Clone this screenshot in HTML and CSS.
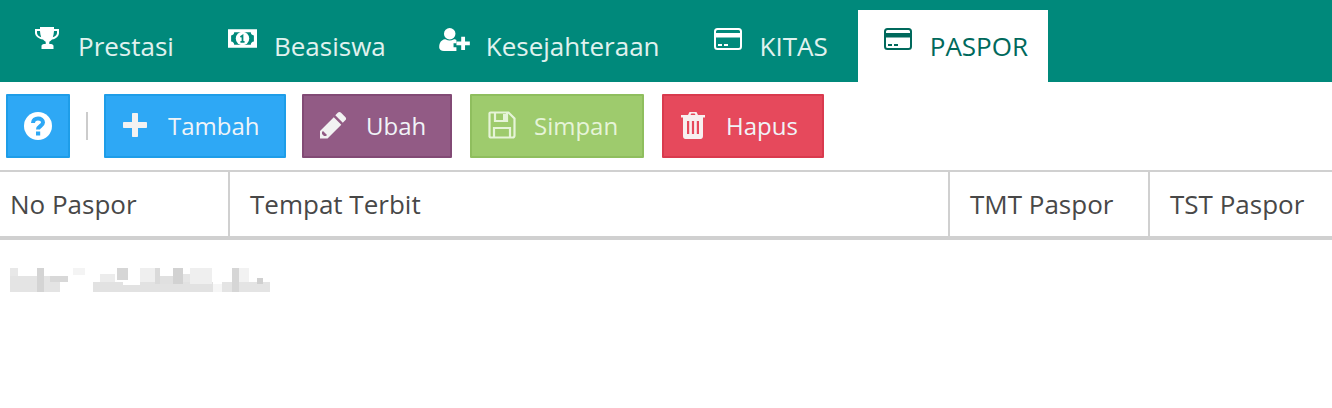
FILE: index.html
```html
<!DOCTYPE html>
<html lang="en">
<head>
  <meta charset="UTF-8">
  <meta name="viewport" content="width=device-width, initial-scale=1.0">
  <title>Data Paspor</title>
  <link rel="stylesheet" href="styles.css">
</head>
<body>

  <!-- Tabs -->
  <ul class="tabs">
    <li class="tab tab-prestasi">
      <svg class="tab-icon icon-trophy" width="26" height="24" viewBox="0 0 26 24"><path fill="#fff" d="M6 1h14v2h5v4c0 3-3 6-7 6.500-.8 1-1.700 1.700-2.700 2.200V18h1.700c1.500 0 2.500 1 2.500 2v3H7.500v-3c0-1 1-2 2.500-2h1.700v-2.300c-1-.5-1.900-1.200-2.700-2.200C5 13 1 10 1 7V3h5V1zM3 5v2c0 1.600 1.700 3.500 4.200 4.200C6.500 9.500 6.100 7.400 6 5H3zm20 0h-3c-.1 2.400-.5 4.500-1.200 6.200C21.300 10.500 23 8.600 23 7V5z"/></svg>
      <span>Prestasi</span>
    </li>
    <li class="tab tab-beasiswa">
      <svg class="tab-icon icon-money" width="29" height="19" viewBox="0 1 28 18"><path fill="#fff" fill-rule="evenodd" d="M0 1h28v18H0V1zm6 3c0 1.700-1.300 3-3 3v6c1.700 0 3 1.300 3 3h16c0-1.700 1.300-3 3-3V7c-1.700 0-3-1.300-3-3H6z"/><circle cx="14" cy="10" r="6.500" fill="#fff"/><path fill="none" stroke="#00897b" stroke-width="1.700" d="M12 8.500l2-1.300v6M12 13.200h4"/></svg>
      <span>Beasiswa</span>
    </li>
    <li class="tab tab-kesejahteraan">
      <svg class="tab-icon icon-user" width="31" height="23" viewBox="0 1 32 24"><circle cx="11" cy="7" r="6" fill="#fff"/><path fill="#fff" d="M3 14c1.500-1 3-1.500 4-1 2.400 1.300 5.600 1.300 8 0 1-.5 2-.2 3 .5V17h-3v4h3v4H5c-3 0-5-1.500-5-4 0-3 1-6 3-7z"/><path fill="#fff" d="M23 10h4v5h5v4h-5v5h-4v-5h-5v-4h5z"/></svg>
      <span>Kesejahteraan</span>
    </li>
    <li class="tab tab-kitas">
      <svg class="tab-icon icon-card" width="28" height="24" viewBox="0 0 28 24"><rect x="1" y="2" width="26" height="20" rx="2.500" fill="none" stroke="#fff" stroke-width="2"/><rect x="1" y="6" width="26" height="4.500" fill="#fff"/><path stroke="#fff" stroke-width="2" d="M4 18h4M10 18h4"/></svg>
      <span>KITAS</span>
    </li>
    <li class="tab tab-paspor active">
      <svg class="tab-icon icon-card" width="28" height="24" viewBox="0 0 28 24"><rect x="1" y="2" width="26" height="20" rx="2.500" fill="none" stroke="#00695c" stroke-width="2"/><rect x="1" y="6" width="26" height="4.500" fill="#00695c"/><path stroke="#00695c" stroke-width="2" d="M4 18h4M10 18h4"/></svg>
      <span>PASPOR</span>
    </li>
  </ul>

  <!-- Toolbar -->
  <div class="toolbar">
    <button class="btn btn-blue btn-help" type="button">
      <svg width="28" height="28" viewBox="0 0 28 28"><circle cx="14" cy="14" r="14" fill="#fff"/><path fill="none" stroke="#2ea8f5" stroke-width="4" d="M9 11c0-3 2.300-4.500 5-4.500s5 1.500 5 4c0 3.500-5 3.500-5 7"/><rect x="12" y="19.500" width="4.200" height="4" fill="#2ea8f5"/></svg>
    </button>
    <span class="divider"></span>
    <button class="btn btn-blue btn-tambah" type="button">
      <svg width="26" height="26" viewBox="0 0 26 26"><path fill="#f2f2f2" d="M10 2c0-.6.400-1 1-1h4c.6 0 1 .4 1 1v8h8c.6 0 1 .4 1 1v4c0 .6-.4 1-1 1h-8v8c0 .6-.4 1-1 1h-4c-.6 0-1-.4-1-1v-8H2c-.6 0-1-.4-1-1v-4c0-.6.4-1 1-1h8z"/></svg>
      <span>Tambah</span>
    </button>
    <button class="btn btn-purple btn-ubah" type="button">
      <svg width="28" height="28" viewBox="1 0 28 28"><path fill="#f2f2f2" fill-rule="evenodd" d="M19 1.500c.8-.8 2-.8 2.800 0l4.700 4.700c.8.800.8 2 0 2.800l-2.700 2.700-7.500-7.500L19 1.500zM14.800 6.200l7.500 7.500L8.500 27.500H1v-7.500L14.800 6.200zM3 21v2l2 2 2 0 1-1-4-4-1 1z"/></svg>
      <span>Ubah</span>
    </button>
    <button class="btn btn-green btn-simpan" type="button">
      <svg width="28" height="28" viewBox="0 0 28 28"><path fill="none" stroke="#e6f4d8" stroke-width="2.200" d="M2.500 1.500h18l6 6v17a2 2 0 0 1-2 2h-22a2 2 0 0 1-1-1v-23a1 1 0 0 1 1-1z"/><path fill="none" stroke="#e6f4d8" stroke-width="2.200" d="M7 2v8h12V2M6 26v-9h16v9"/><rect x="15" y="3" width="3" height="6" fill="#e6f4d8"/></svg>
      <span>Simpan</span>
    </button>
    <button class="btn btn-red btn-hapus" type="button">
      <svg width="26" height="28" viewBox="0 0 26 28"><path fill="#f8f0f0" fill-rule="evenodd" d="M8 4l1.500-3h7L18 4h7v2.500h-2V25c0 1.700-1 3-2.500 3h-15C4 28 3 26.700 3 25V6.500H1V4h7zm2.500 0h5l-.8-1.500h-3.400L10.500 4zM7 10v13h2.200V10H7zm4.900 0v13h2.200V10h-2.200zm4.900 0v13H19V10h-2.200z"/></svg>
      <span>Hapus</span>
    </button>
  </div>

  <!-- Table -->
  <table class="grid">
    <colgroup>
      <col class="col-no">
      <col class="col-tempat">
      <col class="col-tmt">
      <col class="col-tst">
    </colgroup>
    <thead>
      <tr>
        <th>No Paspor</th>
        <th>Tempat Terbit</th>
        <th>TMT Paspor</th>
        <th>TST Paspor</th>
      </tr>
    </thead>
    <tbody>
      <tr>
        <td colspan="4">
          <svg class="blur-row" width="262" height="24" viewBox="0 0 262 24">
            <rect x="0" y="0" width="8" height="8" fill="#e8e8e8"/>
            <rect x="0" y="8" width="50" height="16" fill="#e4e4e4"/>
            <rect x="27" y="0" width="7" height="24" fill="#d4d4d4"/>
            <rect x="40" y="8" width="18" height="6" fill="#d8d8d8"/>
            <rect x="63" y="0" width="12" height="7" fill="#f4f4f4"/>
            <rect x="83" y="14" width="120" height="10" fill="#e2e2e2"/>
            <rect x="90" y="6" width="15" height="8" fill="#ececec"/>
            <rect x="107" y="0" width="11" height="12" fill="#d6d6d6"/>
            <rect x="113" y="12" width="17" height="5" fill="#ffffff"/>
            <rect x="130" y="0" width="15" height="14" fill="#efefef"/>
            <rect x="145" y="0" width="5" height="16" fill="#dadada"/>
            <rect x="150" y="8" width="13" height="8" fill="#e0e0e0"/>
            <rect x="163" y="0" width="10" height="16" fill="#d2d2d2"/>
            <rect x="173" y="6" width="7" height="8" fill="#e6e6e6"/>
            <rect x="180" y="0" width="22" height="16" fill="#efefef"/>
            <rect x="203" y="16" width="9" height="8" fill="#f6f6f6"/>
            <rect x="212" y="14" width="48" height="10" fill="#e4e4e4"/>
            <rect x="222" y="0" width="7" height="24" fill="#d6d6d6"/>
            <rect x="229" y="0" width="10" height="14" fill="#f2f2f2"/>
            <rect x="247" y="10" width="6" height="6" fill="#d0d0d0"/>
          </svg>
        </td>
      </tr>
    </tbody>
  </table>

</body>
</html>
```

FILE: styles.css
```css
body {
  margin: 0;
  font-family: "Open Sans", Arial, sans-serif;
  background-color: #fff;
  color: #444;
}

.tabs {
  display: flex;
  gap: 8px;
  align-items: flex-end;
  height: 82px;
  margin: 0;
  padding: 0 0 0 8px;
  list-style: none;
  background-color: #00897b;
  box-sizing: border-box;
}

.tab {
  display: flex;
  align-items: flex-start;
  gap: 18px;
  height: 72px;
  padding: 0 20px 0 26px;
  box-sizing: border-box;
  color: #e0f2ef;
  font-size: 26px;
  line-height: 72px;
}

.tab-beasiswa {
  gap: 17px;
  padding-right: 19px;
}

.tab-kesejahteraan {
  gap: 16px;
  padding-right: 20px;
}

.tab-kitas {
  gap: 18px;
  padding-right: 22px;
}

.tab-paspor {
  gap: 18px;
  padding-right: 20px;
}

.tab-icon {
  margin-top: 16px;
}

.icon-money {
  margin-top: 19px;
}

.icon-user {
  margin-top: 18px;
}

.icon-card {
  margin-top: 17px;
}

.tab.active {
  background-color: #fff;
  color: #00695c;
}

.toolbar {
  display: flex;
  align-items: center;
  height: 64px;
  margin-top: 12px;
  padding-left: 6px;
}

.btn {
  display: flex;
  align-items: center;
  gap: 20px;
  height: 64px;
  margin: 0;
  padding: 0 16px 2px;
  box-sizing: border-box;
  border: 2px solid;
  border-radius: 1px;
  color: #f0f4f8;
  font-family: inherit;
  font-size: 24px;
  cursor: pointer;
}

.btn-blue {
  background-color: #2ea8f5;
  border-color: #1e9de8;
}

.btn-purple {
  background-color: #925b85;
  border-color: #824a75;
  margin-left: 16px;
  gap: 18px;
}

.btn-green {
  background-color: #9ecb6d;
  border-color: #8fbe5e;
  color: #e6f4d8;
  margin-left: 18px;
  gap: 18px;
}

.btn-red {
  background-color: #e6495c;
  border-color: #d93a4e;
  margin-left: 18px;
}

.btn-help {
  width: 64px;
  padding: 0;
  justify-content: center;
}

.btn-tambah {
  width: 182px;
}

.btn-ubah {
  width: 150px;
}

.btn-simpan {
  width: 174px;
}

.btn-hapus {
  width: 162px;
}

.divider {
  width: 2px;
  height: 28px;
  margin: 0 16px;
  background-color: #ccc;
}

.grid {
  width: 100%;
  margin-top: 12px;
  border-collapse: separate;
  border-spacing: 0;
  table-layout: fixed;
}

.col-no {
  width: 230px;
}

.col-tmt {
  width: 200px;
}

.col-tst {
  width: 182px;
}

.grid th {
  height: 70px;
  padding: 0 0 0 20px;
  border-top: 2px solid #d0d0d0;
  border-bottom: 4px solid #d0d0d0;
  border-right: 2px solid #d0d0d0;
  box-sizing: border-box;
  color: #484848;
  font-size: 26px;
  font-weight: 400;
  text-align: left;
}

.grid th:first-child {
  padding-left: 10px;
}

.grid th:last-child {
  border-right: none;
}

.grid td {
  padding: 28px 0 0 10px;
}

.blur-row {
  display: block;
}
```
